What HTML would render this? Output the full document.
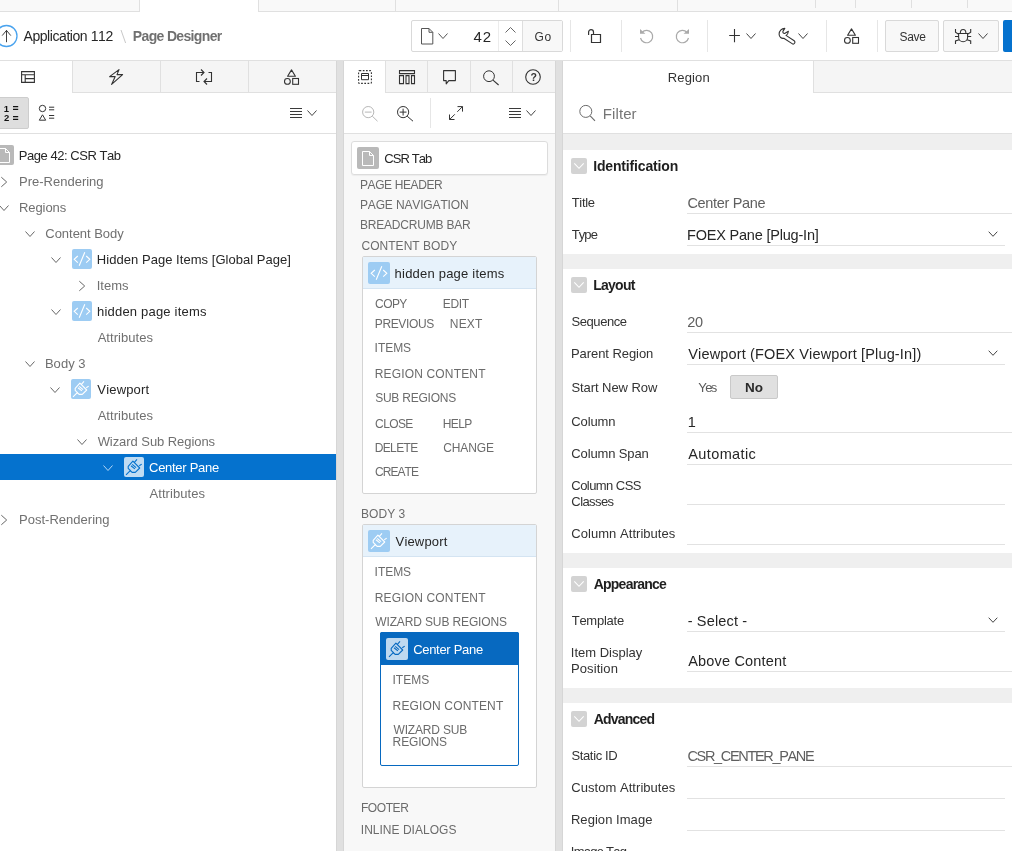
<!DOCTYPE html>
<html lang="en">
<head>
<meta charset="utf-8">
<title>Page Designer</title>
<style>
*{box-sizing:border-box;margin:0;padding:0}
html,body{width:1012px;height:851px;overflow:hidden;background:#fff}
body{font-family:"Liberation Sans",sans-serif;font-size:13px;color:#262626;position:relative}
.abs{position:absolute}
svg{display:block;overflow:visible}
.t{position:absolute;white-space:nowrap;line-height:16px;font-kerning:none}
#w{position:absolute;left:0;top:0;width:1012px;height:851px;will-change:transform}
#strip{position:absolute;left:0;top:0;width:1012px;height:12px;background:#f9f9f9;border-bottom:1px solid #e0e0e0}
#strip i{position:absolute;top:0;height:8px;width:1px;background:#e0e0e0}
#strip .act{position:absolute;left:139px;top:0;width:120px;height:12px;background:#fff;border-left:1px solid #e0e0e0;border-right:1px solid #e0e0e0}
#tb{position:absolute;left:0;top:12px;width:1012px;height:49px;background:#fff;border-bottom:1px solid #e0e0e0}
.sep{position:absolute;top:20px;width:1px;height:32px;background:#e6e6e6}
.btn{position:absolute;top:20px;height:32px;border:1px solid #d9d9d9;border-radius:2px;background:#f8f8f8}
.split{position:absolute;top:61px;width:8px;height:790px;background:#e0e0e0;border-left:1px solid #d6d6d6;border-right:1px solid #d6d6d6}
.tabbar{position:absolute;top:61px;height:32px;background:#f5f5f5;border-bottom:1px solid #e0e0e0}
.tab{position:absolute;top:0;height:31px;border-left:1px solid #e0e0e0}
.tab.on{background:#fff;height:32px;border-left:0}
</style>
</head>
<body>
<div id="w">
<div id="strip"><div class="act"></div><i style="left:395px;height:11px"></i><i style="left:558px;height:11px"></i><i style="left:677px;height:11px"></i><i style="left:815px"></i><i style="left:855px"></i><i style="left:911px"></i><i style="left:967px"></i></div>
<div id="tb"></div>
<svg class="abs" style="left:-6px;top:24px" width="25" height="24" viewBox="-6 24 25 24"><circle cx="6.50" cy="36" r="10.50" fill="#fff" stroke="#4aa3ee" stroke-width="1.30"/><path d="M6.50 30v12.20M2.20 35.60L6.50 30.40l4.30 5.20" fill="none" stroke="#404040" stroke-width="1"/></svg>
<div class="t" style="left:23.47px;top:28px;font-size:14px;color:#262626;letter-spacing:-0.43px;">Application 112</div>
<svg class="abs" style="left:120px;top:29px" width="7" height="15" viewBox="0 0 7 15"><path d="M1 1l4.60 13" stroke="#c8c8c8" stroke-width="1" fill="none"/></svg>
<div class="t" style="left:132.86px;top:28px;font-size:14px;color:#707070;letter-spacing:-0.66px;font-weight:700;">Page Designer</div>
<div class="btn" style="left:411px;width:152px;background:#fff"></div>
<svg class="abs" style="left:420.5px;top:27.5px" width="13" height="17" viewBox="0 0 13 17"><path d="M0.50 0.50h7.50l3.80 3.80v11.70h-11.30zM8 0.50v3.80h3.80" fill="none" stroke="#555" stroke-width="1"/></svg>
<svg class="abs" style="left:438.2px;top:33px" width="10" height="6" viewBox="0 0 10 6"><path d="M0.5 0.5l4.5 5.0l4.5-5.0" fill="none" stroke="#555" stroke-width="1"/></svg>
<div class="t" style="left:473.46px;top:29px;font-size:15px;color:#262626;letter-spacing:0.91px;">42</div>
<div class="abs" style="left:498px;top:21px;width:1px;height:30px;background:#ececec;"></div>
<svg class="abs" style="left:505px;top:27px" width="11" height="19" viewBox="0 0 11 19"><path d="M0.50 5.50l5-5l5 5M0.50 13.50l5 5l5-5" fill="none" stroke="#666" stroke-width="1"/></svg>
<div class="abs" style="left:522px;top:21px;width:40px;height:30px;background:#f8f8f8;border-left:1px solid #dedede;"></div>
<div class="t" style="left:534.40px;top:29px;font-size:12px;color:#333;letter-spacing:0.80px;">Go</div>
<div class="sep" style="left:570px"></div>
<svg class="abs" style="left:587px;top:28px" width="15" height="16" viewBox="0 0 15 16"><path d="M4.50 6.50h9v8h-9zM1.60 6.90v-2.80a2.45 2.45 0 0 1 4.90 0v2.40" fill="none" stroke="#333" stroke-width="1.20"/></svg>
<div class="sep" style="left:621px"></div>
<svg class="abs" style="left:639px;top:28px" width="17" height="16" viewBox="0 0 17 16"><path d="M3 4.30a6.20 6.20 0 1 1 -1.50 5.70" fill="none" stroke="#aaa" stroke-width="1.20"/><path d="M1 1l5.40 4.80h-5.40z" fill="#aaa"/></svg>
<svg class="abs" style="left:673px;top:28px" width="17" height="16" viewBox="0 0 17 16"><path d="M14 4.30a6.20 6.20 0 1 0 1.50 5.70" fill="none" stroke="#aaa" stroke-width="1.20"/><path d="M16 1l-5.40 4.80h5.40z" fill="#aaa"/></svg>
<div class="sep" style="left:707px"></div>
<svg class="abs" style="left:728px;top:29px" width="13" height="14" viewBox="0 0 13 14"><path d="M6.50 0v13.20M1.20 6.50h10.70" fill="none" stroke="#333" stroke-width="1.10"/></svg>
<svg class="abs" style="left:746px;top:33px" width="10" height="6" viewBox="0 0 10 6"><path d="M0.5 0.5l4.5 5.0l4.5-5.0" fill="none" stroke="#444" stroke-width="1"/></svg>
<svg class="abs" style="left:778px;top:28px" width="18" height="16" viewBox="0 0 18 16"><path d="M10.40 3.30C10.20 5.50 9.20 6.80 8 7.40L16.20 12.80A1.70 1.70 0 0 1 14.10 15.60L5.80 10.30C3.50 10.80 1.20 9 1.10 6.20C1 3 3.50 0.50 6.80 0.40L4.90 3.40C4.60 4.60 5.40 5.60 6.60 5.50Z" fill="none" stroke="#333" stroke-width="1.10" stroke-linejoin="round"/></svg>
<svg class="abs" style="left:798px;top:33px" width="10" height="6" viewBox="0 0 10 6"><path d="M0.5 0.5l4.5 5.0l4.5-5.0" fill="none" stroke="#444" stroke-width="1"/></svg>
<div class="sep" style="left:826px"></div>
<svg class="abs" style="left:844px;top:28px" width="15" height="16" viewBox="0 0 15 16"><path d="M7.50 0.90l3.90 6.40h-7.80z" fill="none" stroke="#333" stroke-width="1.10" stroke-linejoin="round"/><circle cx="3.40" cy="12.40" r="2.90" fill="none" stroke="#333" stroke-width="1.10"/><rect x="8.70" y="9.50" width="5.80" height="5.80" fill="none" stroke="#333" stroke-width="1.10"/></svg>
<div class="sep" style="left:877px"></div>
<div class="btn" style="left:885px;width:54px"></div>
<div class="t" style="left:899.46px;top:29px;font-size:12px;color:#333;letter-spacing:-0.32px;">Save</div>
<div class="btn" style="left:943px;width:56px"></div>
<svg class="abs" style="left:954px;top:28px" width="18" height="16" viewBox="0 0 18 16"><path d="M4.60 5.50h9v3.80a4.50 4.50 0 0 1 -9 0zM6.30 5.30a2.80 3.80 0 0 1 5.60 0M4.60 8.50h-3.60M13.60 8.50h3.60M4.60 6.20l-3.10-1.90v-3.30M13.60 6.20l3.10-1.90v-3.30M5.20 11.80l-3.70 1.20v3M13 11.80l3.70 1.20v3" fill="none" stroke="#333" stroke-width="1.10"/></svg>
<svg class="abs" style="left:978px;top:33px" width="10" height="6" viewBox="0 0 10 6"><path d="M0.5 0.5l4.5 5.0l4.5-5.0" fill="none" stroke="#444" stroke-width="1"/></svg>
<div class="abs" style="left:1003px;top:20px;width:20px;height:32px;background:#0572ce;border-radius:2px;"></div>
<div class="tabbar" style="left:0;width:336px"><div class="tab on" style="left:0;width:72px"></div><div class="tab" style="left:72px;width:88px"></div><div class="tab" style="left:160px;width:88px"></div><div class="tab" style="left:248px;width:88px"></div></div>
<svg class="abs" style="left:21px;top:71px" width="14" height="12" viewBox="0 0 14 12"><path d="M0.60 0.60h12.80v10.80h-12.80zM0.60 3.80h12.80M4.20 3.80v7.60M4.20 7.60h9.20" fill="none" stroke="#333" stroke-width="1.10"/></svg>
<svg class="abs" style="left:109px;top:69px" width="14" height="16" viewBox="0 0 14 16"><path d="M10 0.60l-9.40 7h5.60l-3.60 7.80l11-9.80h-5.60z" fill="none" stroke="#333" stroke-width="1.10" stroke-linejoin="round"/></svg>
<svg class="abs" style="left:196px;top:69px" width="16" height="16" viewBox="0 0 16 16"><path d="M3.50 12.50h-3v-9h7.30M5 0.50l3 3l-3 3M12.50 3.50h3v9h-7.30M11 9.50l-3 3l3 3" fill="none" stroke="#333" stroke-width="1.10"/></svg>
<svg class="abs" style="left:284px;top:69px" width="15" height="16" viewBox="0 0 15 16"><path d="M7.50 0.90l3.90 6.40h-7.80z" fill="none" stroke="#333" stroke-width="1.10" stroke-linejoin="round"/><circle cx="3.40" cy="12.40" r="2.90" fill="none" stroke="#333" stroke-width="1.10"/><rect x="8.70" y="9.50" width="5.80" height="5.80" fill="none" stroke="#333" stroke-width="1.10"/></svg>
<div class="abs" style="left:0px;top:133px;width:336px;height:1px;background:#e0e0e0;"></div>
<div class="abs" style="left:-4px;top:97px;width:33px;height:32px;background:#dedede;border:1px solid #cdcdcd;border-radius:2px;"></div>
<div class="t" style="left:3.70px;top:101px;font-size:9.5px;color:#111;font-weight:700;">1</div>
<div class="t" style="left:3.97px;top:110px;font-size:9.5px;color:#111;font-weight:700;">2</div>
<svg class="abs" style="left:13px;top:106px" width="6" height="14" viewBox="0 0 6 14"><path d="M0 0.60h5.20M0 3.40h5.20M0 10.60h5.20M0 13.40h5.20" fill="none" stroke="#111" stroke-width="1.10"/></svg>
<svg class="abs" style="left:38px;top:104px" width="17" height="17" viewBox="0 0 17 17"><circle cx="4.50" cy="4.50" r="3.20" fill="none" stroke="#333" stroke-width="1"/><path d="M4.50 10.80l3.20 5.40h-6.40zM11 3.20h5.20M11 5.80h5.20M11 11.50h5.20M11 14.20h5.20" fill="none" stroke="#333" stroke-width="1"/></svg>
<svg class="abs" style="left:290px;top:108px" width="12" height="10" viewBox="0 0 12 10"><path d="M0 0.50h12M0 3.50h12M0 6.50h12M0 9.50h12" fill="none" stroke="#3a3a3a" stroke-width="1"/></svg>
<svg class="abs" style="left:307px;top:110px" width="10" height="6" viewBox="0 0 10 6"><path d="M0.5 0.5l4.5 5.0l4.5-5.0" fill="none" stroke="#444" stroke-width="1"/></svg>
<svg class="abs" style="left:-6px;top:145px" width="20" height="20" viewBox="0 0 20 20"><rect width="20" height="20" rx="2" fill="#b9b9b9"/><g transform="translate(0.0 0.0)"><path d="M4.50 3.50h7l4 4v10h-11zM11.50 3.50v4h4" fill="none" stroke="#fff" stroke-width="1"/></g></svg>
<div class="t" style="left:18.73px;top:148px;font-size:13px;color:#262626;letter-spacing:-0.45px;">Page 42: CSR Tab</div>
<svg class="abs" style="left:0.79px;top:177px" width="6" height="10" viewBox="0 0 6 10"><path d="M0.3 0.2l5.4 4.80l-5.40 4.80" fill="none" stroke="#666" stroke-width="1"/></svg>
<div class="t" style="left:19.03px;top:174px;font-size:13px;color:#707070;">Pre-Rendering</div>
<svg class="abs" style="left:-1px;top:205px" width="10" height="6" viewBox="0 0 10 6"><path d="M0.5 0.5l4.5 5.0l4.5-5.0" fill="none" stroke="#666" stroke-width="1"/></svg>
<div class="t" style="left:19.03px;top:200px;font-size:13px;color:#707070;letter-spacing:-0.08px;">Regions</div>
<svg class="abs" style="left:25px;top:231px" width="10" height="6" viewBox="0 0 10 6"><path d="M0.5 0.5l4.5 5.0l4.5-5.0" fill="none" stroke="#666" stroke-width="1"/></svg>
<div class="t" style="left:45.34px;top:226px;font-size:13px;color:#707070;letter-spacing:-0.04px;">Content Body</div>
<svg class="abs" style="left:72px;top:249px" width="20" height="20" viewBox="0 0 20 20"><rect width="20" height="20" rx="2" fill="#9dccf3"/><g transform="translate(0.0 0.0)"><path d="M5.80 7l-3.60 3.30l3.60 3.30M14.20 7l3.60 3.30l-3.60 3.30M12.80 3.20l-5.60 13.60" fill="none" stroke="#fff" stroke-width="1.10"/></g></svg>
<svg class="abs" style="left:51px;top:257px" width="10" height="6" viewBox="0 0 10 6"><path d="M0.5 0.5l4.5 5.0l4.5-5.0" fill="none" stroke="#666" stroke-width="1"/></svg>
<div class="t" style="left:96.83px;top:252px;font-size:13px;color:#262626;letter-spacing:0.04px;">Hidden Page Items [Global Page]</div>
<svg class="abs" style="left:78.8px;top:281px" width="6" height="10" viewBox="0 0 6 10"><path d="M0.3 0.2l5.4 4.80l-5.40 4.80" fill="none" stroke="#666" stroke-width="1"/></svg>
<div class="t" style="left:96.70px;top:278px;font-size:13px;color:#707070;">Items</div>
<svg class="abs" style="left:72px;top:301px" width="20" height="20" viewBox="0 0 20 20"><rect width="20" height="20" rx="2" fill="#9dccf3"/><g transform="translate(0.0 0.0)"><path d="M5.80 7l-3.60 3.30l3.60 3.30M14.20 7l3.60 3.30l-3.60 3.30M12.80 3.20l-5.60 13.60" fill="none" stroke="#fff" stroke-width="1.10"/></g></svg>
<svg class="abs" style="left:51px;top:309px" width="10" height="6" viewBox="0 0 10 6"><path d="M0.5 0.5l4.5 5.0l4.5-5.0" fill="none" stroke="#666" stroke-width="1"/></svg>
<div class="t" style="left:97.00px;top:304px;font-size:13px;color:#262626;letter-spacing:0.20px;">hidden page items</div>
<div class="t" style="left:97.67px;top:330px;font-size:13px;color:#707070;letter-spacing:0.04px;">Attributes</div>
<svg class="abs" style="left:25px;top:361px" width="10" height="6" viewBox="0 0 10 6"><path d="M0.5 0.5l4.5 5.0l4.5-5.0" fill="none" stroke="#666" stroke-width="1"/></svg>
<div class="t" style="left:44.93px;top:356px;font-size:13px;color:#707070;letter-spacing:0.03px;">Body 3</div>
<svg class="abs" style="left:71px;top:379px" width="20" height="20" viewBox="0 0 20 20"><rect width="20" height="20" rx="2" fill="#9dccf3"/><g transform="translate(0.0 0.0)"><path d="M2 17.80l4.80-4.60M4.20 9.30l4.70-5.20l6.80 6.90l-4.40 4.40h-3.20l-3.90-4zM10.60 5.20l2.40-2.80M15.30 8.80l2.40-1.70M7 8.70l3.90 3.20M8.20 7.40l3.90 3.30" fill="none" stroke="#fff" stroke-width="1.10" stroke-linejoin="round"/></g></svg>
<svg class="abs" style="left:50px;top:387px" width="10" height="6" viewBox="0 0 10 6"><path d="M0.5 0.5l4.5 5.0l4.5-5.0" fill="none" stroke="#666" stroke-width="1"/></svg>
<div class="t" style="left:97.34px;top:382px;font-size:13px;color:#262626;letter-spacing:0.17px;">Viewport</div>
<div class="t" style="left:97.67px;top:408px;font-size:13px;color:#707070;letter-spacing:0.04px;">Attributes</div>
<svg class="abs" style="left:77px;top:439px" width="10" height="6" viewBox="0 0 10 6"><path d="M0.5 0.5l4.5 5.0l4.5-5.0" fill="none" stroke="#666" stroke-width="1"/></svg>
<div class="t" style="left:97.64px;top:434px;font-size:13px;color:#707070;letter-spacing:-0.06px;">Wizard Sub Regions</div>
<div class="abs" style="left:0px;top:454px;width:336px;height:26px;background:#0572ce;"></div>
<svg class="abs" style="left:124px;top:457px" width="20" height="20" viewBox="0 0 20 20"><rect width="20" height="20" rx="2" fill="#c0dcf3"/><g transform="translate(0.0 0.0)"><path d="M2 17.80l4.80-4.60M4.20 9.30l4.70-5.20l6.80 6.90l-4.40 4.40h-3.20l-3.90-4zM10.60 5.20l2.40-2.80M15.30 8.80l2.40-1.70M7 8.70l3.90 3.20M8.20 7.40l3.90 3.30" fill="none" stroke="#0572ce" stroke-width="1.10" stroke-linejoin="round"/></g></svg>
<svg class="abs" style="left:103px;top:465px" width="10" height="6" viewBox="0 0 10 6"><path d="M0.5 0.5l4.5 5.0l4.5-5.0" fill="none" stroke="#b5d6f5" stroke-width="1"/></svg>
<div class="t" style="left:149.04px;top:460px;font-size:13px;color:#fff;letter-spacing:-0.28px;">Center Pane</div>
<div class="t" style="left:149.47px;top:486px;font-size:13px;color:#707070;letter-spacing:0.08px;">Attributes</div>
<svg class="abs" style="left:0.79px;top:515px" width="6" height="10" viewBox="0 0 6 10"><path d="M0.3 0.2l5.4 4.80l-5.40 4.80" fill="none" stroke="#666" stroke-width="1"/></svg>
<div class="t" style="left:19.03px;top:512px;font-size:13px;color:#707070;letter-spacing:0.02px;">Post-Rendering</div>
<div class="split" style="left:336px"></div>
<div class="abs" style="left:344px;top:134px;width:211px;height:717px;background:#f8f8f8;"></div>
<div class="tabbar" style="left:344px;width:211px"><div class="tab on" style="left:0;width:41px"></div><div class="tab" style="left:41px;width:42px"></div><div class="tab" style="left:83px;width:43px"></div><div class="tab" style="left:126px;width:42px"></div><div class="tab" style="left:168px;width:43px"></div></div>
<svg class="abs" style="left:358px;top:70px" width="14" height="14" viewBox="0 0 14 14"><rect x="0.60" y="0.60" width="12.80" height="12.80" rx="1" fill="none" stroke="#333" stroke-width="1.10" stroke-dasharray="1.70 1.50"/><path d="M3.50 3.50h7v6.20h-7zM3.50 5.50h7" fill="none" stroke="#333" stroke-width="1"/></svg>
<svg class="abs" style="left:399px;top:70px" width="16" height="14" viewBox="0 0 16 14"><path d="M0.50 0.60h15v3h-15zM0.50 5.60h4v8h-4zM7 5.60h3v8h-3zM12.50 5.60h3v8h-3z" fill="none" stroke="#333" stroke-width="1.10"/></svg>
<svg class="abs" style="left:443px;top:70px" width="13" height="15" viewBox="0 0 13 15"><path d="M0.60 0.60h11.80v10h-6.60l-2.60 3.20v-3.20h-2.60z" fill="none" stroke="#333" stroke-width="1.10" stroke-linejoin="round"/></svg>
<svg class="abs" style="left:483px;top:70px" width="16" height="16" viewBox="0 0 16 16"><circle cx="6" cy="6.20" r="5.40" fill="none" stroke="#333" stroke-width="1"/><path d="M10 10.20l5.60 4.80" fill="none" stroke="#333" stroke-width="1.10"/></svg>
<svg class="abs" style="left:525px;top:69px" width="16" height="16" viewBox="0 0 16 16"><circle cx="8" cy="8" r="7.30" fill="none" stroke="#333" stroke-width="1.10"/></svg>
<div class="t" style="left:530.42px;top:69px;font-size:10.5px;color:#333;font-weight:700;">?</div>
<div class="abs" style="left:344px;top:93px;width:211px;height:40px;background:#fff;"></div>
<div class="abs" style="left:344px;top:133px;width:211px;height:1px;background:#e0e0e0;"></div>
<svg class="abs" style="left:362px;top:106px" width="16" height="16" viewBox="0 0 16 16"><circle cx="6.20" cy="6.10" r="5.60" fill="none" stroke="#b8b8b8" stroke-width="1"/><path d="M2.80 6.10h6.80M10.30 10.20l5.20 5" fill="none" stroke="#b8b8b8" stroke-width="1"/></svg>
<svg class="abs" style="left:397px;top:106px" width="17" height="16" viewBox="0 0 17 16"><circle cx="6.10" cy="6.10" r="5.60" fill="none" stroke="#333" stroke-width="1"/><path d="M2.70 6.10h6.80M6.10 2.70v6.80M10.20 10.20l5.80 5" fill="none" stroke="#333" stroke-width="1"/></svg>
<div class="abs" style="left:430px;top:98px;width:1px;height:30px;background:#e6e6e6;"></div>
<svg class="abs" style="left:449px;top:106px" width="14" height="14" viewBox="0 0 14 14"><path d="M8.50 0.60h5v5M13.50 0.60l-5.20 5.20M5.80 8.30l-5.20 5.20M0.50 8.50v5h5" fill="none" stroke="#333" stroke-width="1"/></svg>
<svg class="abs" style="left:509px;top:108px" width="12" height="10" viewBox="0 0 12 10"><path d="M0 0.50h12M0 3.50h12M0 6.50h12M0 9.50h12" fill="none" stroke="#3a3a3a" stroke-width="1"/></svg>
<svg class="abs" style="left:525.5px;top:110px" width="10" height="6" viewBox="0 0 10 6"><path d="M0.5 0.5l4.5 5.0l4.5-5.0" fill="none" stroke="#444" stroke-width="1"/></svg>
<div class="abs" style="left:351px;top:141px;width:197px;height:34px;background:#fff;border:1px solid #dcdcdc;border-radius:3px;box-shadow:0 1px 1px rgba(0,0,0,.05);"></div>
<svg class="abs" style="left:357px;top:147px" width="22" height="22" viewBox="0 0 22 22"><rect width="22" height="22" rx="2" fill="#b9b9b9"/><g transform="translate(1.0 1.0)"><path d="M4.50 3.50h7l4 4v10h-11zM11.50 3.50v4h4" fill="none" stroke="#fff" stroke-width="1"/></g></svg>
<div class="t" style="left:384.24px;top:151px;font-size:13px;color:#262626;letter-spacing:-0.89px;">CSR Tab</div>
<div class="t" style="left:359.92px;top:177px;font-size:12px;color:#6b6b6b;letter-spacing:-0.39px;">PAGE HEADER</div>
<div class="t" style="left:359.92px;top:197px;font-size:12px;color:#6b6b6b;letter-spacing:-0.14px;">PAGE NAVIGATION</div>
<div class="t" style="left:359.92px;top:217px;font-size:12px;color:#6b6b6b;letter-spacing:-0.20px;">BREADCRUMB BAR</div>
<div class="t" style="left:361.49px;top:238px;font-size:12px;color:#6b6b6b;letter-spacing:0.03px;">CONTENT BODY</div>
<div class="abs" style="left:362px;top:256px;width:175px;height:238px;background:#fff;border:1px solid #d4d4d4;border-radius:2px;"></div>
<div class="abs" style="left:363px;top:257px;width:173px;height:32px;background:#e7f2fb;border-bottom:1px solid #d4e4f2;"></div>
<svg class="abs" style="left:368px;top:262px" width="22" height="22" viewBox="0 0 22 22"><rect width="22" height="22" rx="2" fill="#9dccf3"/><g transform="translate(1.0 1.0)"><path d="M5.80 7l-3.60 3.30l3.60 3.30M14.20 7l3.60 3.30l-3.60 3.30M12.80 3.20l-5.60 13.60" fill="none" stroke="#fff" stroke-width="1.10"/></g></svg>
<div class="t" style="left:394.60px;top:266px;font-size:13px;color:#262626;letter-spacing:0.21px;">hidden page items</div>
<div class="t" style="left:375.09px;top:296px;font-size:12px;color:#6b6b6b;letter-spacing:-0.58px;">COPY</div>
<div class="t" style="left:442.82px;top:296px;font-size:12px;color:#6b6b6b;letter-spacing:-0.32px;">EDIT</div>
<div class="t" style="left:374.72px;top:316px;font-size:12px;color:#6b6b6b;letter-spacing:-0.34px;">PREVIOUS</div>
<div class="t" style="left:449.82px;top:316px;font-size:12px;color:#6b6b6b;letter-spacing:0.15px;">NEXT</div>
<div class="t" style="left:374.59px;top:340px;font-size:12px;color:#6b6b6b;letter-spacing:-0.03px;">ITEMS</div>
<div class="t" style="left:374.72px;top:366px;font-size:12px;color:#6b6b6b;letter-spacing:0.16px;">REGION CONTENT</div>
<div class="t" style="left:375.16px;top:390px;font-size:12px;color:#6b6b6b;letter-spacing:-0.23px;">SUB REGIONS</div>
<div class="t" style="left:375.09px;top:416px;font-size:12px;color:#6b6b6b;letter-spacing:-0.61px;">CLOSE</div>
<div class="t" style="left:442.82px;top:416px;font-size:12px;color:#6b6b6b;letter-spacing:-0.61px;">HELP</div>
<div class="t" style="left:374.72px;top:440px;font-size:12px;color:#6b6b6b;letter-spacing:-0.64px;">DELETE</div>
<div class="t" style="left:443.19px;top:440px;font-size:12px;color:#6b6b6b;letter-spacing:-0.08px;">CHANGE</div>
<div class="t" style="left:375.09px;top:464px;font-size:12px;color:#6b6b6b;letter-spacing:-0.97px;">CREATE</div>
<div class="t" style="left:361.02px;top:506px;font-size:12px;color:#6b6b6b;letter-spacing:0.04px;">BODY 3</div>
<div class="abs" style="left:362px;top:524px;width:175px;height:264px;background:#fff;border:1px solid #d4d4d4;border-radius:2px;"></div>
<div class="abs" style="left:363px;top:525px;width:173px;height:32px;background:#e7f2fb;border-bottom:1px solid #d4e4f2;"></div>
<svg class="abs" style="left:368px;top:530px" width="22" height="22" viewBox="0 0 22 22"><rect width="22" height="22" rx="2" fill="#9dccf3"/><g transform="translate(1.0 1.0)"><path d="M2 17.80l4.80-4.60M4.20 9.30l4.70-5.20l6.80 6.90l-4.40 4.40h-3.20l-3.90-4zM10.60 5.20l2.40-2.80M15.30 8.80l2.40-1.70M7 8.70l3.90 3.20M8.20 7.40l3.90 3.30" fill="none" stroke="#fff" stroke-width="1.10" stroke-linejoin="round"/></g></svg>
<div class="t" style="left:395.54px;top:534px;font-size:13px;color:#262626;letter-spacing:0.18px;">Viewport</div>
<div class="t" style="left:374.59px;top:564px;font-size:12px;color:#6b6b6b;letter-spacing:-0.03px;">ITEMS</div>
<div class="t" style="left:374.72px;top:590px;font-size:12px;color:#6b6b6b;letter-spacing:0.16px;">REGION CONTENT</div>
<div class="t" style="left:375.25px;top:614px;font-size:12px;color:#6b6b6b;letter-spacing:-0.13px;">WIZARD SUB REGIONS</div>
<div class="abs" style="left:380px;top:632px;width:139px;height:134px;background:#fff;border:1px solid #0769c0;border-radius:2px;"></div>
<div class="abs" style="left:380px;top:632px;width:139px;height:33px;background:#0769c0;border-radius:2px 2px 0 0;"></div>
<svg class="abs" style="left:386px;top:638px" width="22" height="22" viewBox="0 0 22 22"><rect width="22" height="22" rx="2" fill="#bfd9f0"/><g transform="translate(1.0 1.0)"><path d="M2 17.80l4.80-4.60M4.20 9.30l4.70-5.20l6.80 6.90l-4.40 4.40h-3.20l-3.90-4zM10.60 5.20l2.40-2.80M15.30 8.80l2.40-1.70M7 8.70l3.90 3.20M8.20 7.40l3.90 3.30" fill="none" stroke="#0769c0" stroke-width="1.10" stroke-linejoin="round"/></g></svg>
<div class="t" style="left:413.14px;top:642px;font-size:13px;color:#fff;letter-spacing:-0.30px;">Center Pane</div>
<div class="t" style="left:392.49px;top:672px;font-size:12px;color:#6b6b6b;letter-spacing:0.02px;">ITEMS</div>
<div class="t" style="left:392.62px;top:698px;font-size:12px;color:#6b6b6b;letter-spacing:0.15px;">REGION CONTENT</div>
<div class="t" style="left:393.55px;top:722px;font-size:12px;color:#6b6b6b;letter-spacing:-0.18px;">WIZARD SUB</div>
<div class="t" style="left:392.62px;top:734px;font-size:12px;color:#6b6b6b;letter-spacing:-0.15px;">REGIONS</div>
<div class="t" style="left:360.92px;top:800px;font-size:12px;color:#6b6b6b;letter-spacing:-0.41px;">FOOTER</div>
<div class="t" style="left:360.79px;top:822px;font-size:12px;color:#6b6b6b;letter-spacing:0.02px;">INLINE DIALOGS</div>
<div class="split" style="left:555px"></div>
<div class="abs" style="left:563px;top:61px;width:449px;height:32px;background:#f5f5f5;border-bottom:1px solid #e0e0e0;"></div>
<div class="abs" style="left:563px;top:61px;width:251px;height:32px;background:#fff;border-right:1px solid #e0e0e0;"></div>
<div class="t" style="left:667.83px;top:70px;font-size:13px;color:#333;letter-spacing:0.12px;">Region</div>
<svg class="abs" style="left:579px;top:105px" width="17" height="17" viewBox="0 0 17 17"><circle cx="6.80" cy="6.40" r="6" fill="none" stroke="#6a6a6a" stroke-width="1"/><path d="M11.20 10.80l4.80 5" fill="none" stroke="#6a6a6a" stroke-width="1.10"/></svg>
<div class="t" style="left:602.87px;top:106px;font-size:15px;color:#757575;letter-spacing:0.07px;">Filter</div>
<div class="abs" style="left:563px;top:133px;width:449px;height:1px;background:#e0e0e0;"></div>
<div class="abs" style="left:563px;top:134px;width:449px;height:16px;background:#efefef;"></div>
<div class="abs" style="left:571px;top:158px;width:16px;height:16px;background:#d3d3d3;border-radius:2px;"></div>
<svg class="abs" style="left:574px;top:163px" width="10" height="6" viewBox="0 0 10 6"><path d="M0.30 0.40l4.70 4.90l4.70-4.90" fill="none" stroke="#fff" stroke-width="1.10"/></svg>
<div class="t" style="left:593.16px;top:158px;font-size:14px;color:#1f1f1f;letter-spacing:-0.15px;font-weight:700;">Identification</div>
<div class="t" style="left:571.71px;top:195px;font-size:13px;color:#333;letter-spacing:-0.32px;">Title</div>
<div class="t" style="left:687.46px;top:195px;font-size:14.5px;color:#5f5f5f;letter-spacing:-0.32px;">Center Pane</div>
<div class="abs" style="left:687px;top:213px;width:325px;height:1px;background:#e2e2e2;"></div>
<div class="t" style="left:571.71px;top:227px;font-size:13px;color:#333;letter-spacing:-0.91px;">Type</div>
<div class="t" style="left:687.01px;top:227px;font-size:14.5px;color:#262626;letter-spacing:-0.20px;">FOEX Pane [Plug-In]</div>
<div class="abs" style="left:687px;top:245px;width:318px;height:1px;background:#e2e2e2;"></div>
<svg class="abs" style="left:988px;top:230.7px" width="10" height="6" viewBox="0 0 10 6"><path d="M0.7 0.7l4.3 4.6l4.3-4.6" fill="none" stroke="#444" stroke-width="1"/></svg>
<div class="abs" style="left:563px;top:254px;width:449px;height:15px;background:#efefef;"></div>
<div class="abs" style="left:571px;top:277px;width:16px;height:16px;background:#d3d3d3;border-radius:2px;"></div>
<svg class="abs" style="left:574px;top:282px" width="10" height="6" viewBox="0 0 10 6"><path d="M0.30 0.40l4.70 4.90l4.70-4.90" fill="none" stroke="#fff" stroke-width="1.10"/></svg>
<div class="t" style="left:593.16px;top:277px;font-size:14px;color:#1f1f1f;letter-spacing:-0.72px;font-weight:700;">Layout</div>
<div class="t" style="left:571.41px;top:314px;font-size:13px;color:#333;letter-spacing:-0.41px;">Sequence</div>
<div class="t" style="left:687.17px;top:314px;font-size:14.5px;color:#5f5f5f;letter-spacing:-0.23px;">20</div>
<div class="abs" style="left:687px;top:332px;width:325px;height:1px;background:#e2e2e2;"></div>
<div class="t" style="left:570.93px;top:346px;font-size:13px;color:#333;letter-spacing:-0.06px;">Parent Region</div>
<div class="t" style="left:688.24px;top:346px;font-size:14.5px;color:#262626;letter-spacing:0.15px;">Viewport (FOEX Viewport [Plug-In])</div>
<div class="abs" style="left:687px;top:364px;width:318px;height:1px;background:#e2e2e2;"></div>
<svg class="abs" style="left:988px;top:349.7px" width="10" height="6" viewBox="0 0 10 6"><path d="M0.7 0.7l4.3 4.6l4.3-4.6" fill="none" stroke="#444" stroke-width="1"/></svg>
<div class="t" style="left:571.41px;top:380px;font-size:13px;color:#333;letter-spacing:-0.06px;">Start New Row</div>
<div class="t" style="left:698.21px;top:380px;font-size:13px;color:#5a5a5a;letter-spacing:-1.72px;">Yes</div>
<div class="abs" style="left:730px;top:375px;width:48px;height:24px;background:#e0e0e0;border:1px solid #c9c9c9;border-radius:2px;"></div>
<div class="t" style="left:744.90px;top:380px;font-size:13.5px;color:#2a2a2a;letter-spacing:0.23px;font-weight:700;">No</div>
<div class="t" style="left:571.34px;top:414px;font-size:13px;color:#333;letter-spacing:-0.12px;">Column</div>
<div class="t" style="left:687.70px;top:414px;font-size:14.5px;color:#262626;">1</div>
<div class="abs" style="left:687px;top:432px;width:325px;height:1px;background:#e2e2e2;"></div>
<div class="t" style="left:571.34px;top:446px;font-size:13px;color:#333;letter-spacing:-0.14px;">Column Span</div>
<div class="t" style="left:688.27px;top:446px;font-size:14.5px;color:#262626;letter-spacing:0.39px;">Automatic</div>
<div class="abs" style="left:687px;top:464px;width:325px;height:1px;background:#e2e2e2;"></div>
<div class="t" style="left:571.34px;top:478px;font-size:13px;color:#333;letter-spacing:-0.56px;">Column CSS</div>
<div class="t" style="left:571.34px;top:494px;font-size:13px;color:#333;letter-spacing:-0.58px;">Classes</div>
<div class="abs" style="left:687px;top:504px;width:318px;height:1px;background:#e2e2e2;"></div>
<div class="t" style="left:571.34px;top:526px;font-size:13px;color:#333;letter-spacing:0.04px;">Column Attributes</div>
<div class="abs" style="left:687px;top:544px;width:318px;height:1px;background:#e2e2e2;"></div>
<div class="abs" style="left:563px;top:553px;width:449px;height:15px;background:#efefef;"></div>
<div class="abs" style="left:571px;top:576px;width:16px;height:16px;background:#d3d3d3;border-radius:2px;"></div>
<svg class="abs" style="left:574px;top:581px" width="10" height="6" viewBox="0 0 10 6"><path d="M0.30 0.40l4.70 4.90l4.70-4.90" fill="none" stroke="#fff" stroke-width="1.10"/></svg>
<div class="t" style="left:593.75px;top:576px;font-size:14px;color:#1f1f1f;letter-spacing:-0.78px;font-weight:700;">Appearance</div>
<div class="t" style="left:571.71px;top:613px;font-size:13px;color:#333;letter-spacing:-0.25px;">Template</div>
<div class="t" style="left:687.66px;top:613px;font-size:14.5px;color:#262626;letter-spacing:0.17px;">- Select -</div>
<div class="abs" style="left:687px;top:631px;width:318px;height:1px;background:#e2e2e2;"></div>
<svg class="abs" style="left:988px;top:616.7px" width="10" height="6" viewBox="0 0 10 6"><path d="M0.7 0.7l4.3 4.6l4.3-4.6" fill="none" stroke="#444" stroke-width="1"/></svg>
<div class="t" style="left:570.80px;top:645px;font-size:13px;color:#333;">Item Display</div>
<div class="t" style="left:570.93px;top:661px;font-size:13px;color:#333;letter-spacing:0.11px;">Position</div>
<div class="t" style="left:688.27px;top:653px;font-size:14.5px;color:#262626;letter-spacing:0.17px;">Above Content</div>
<div class="abs" style="left:687px;top:671px;width:325px;height:1px;background:#e2e2e2;"></div>
<div class="abs" style="left:563px;top:688px;width:449px;height:15px;background:#efefef;"></div>
<div class="abs" style="left:571px;top:711px;width:16px;height:16px;background:#d3d3d3;border-radius:2px;"></div>
<svg class="abs" style="left:574px;top:716px" width="10" height="6" viewBox="0 0 10 6"><path d="M0.30 0.40l4.70 4.90l4.70-4.90" fill="none" stroke="#fff" stroke-width="1.10"/></svg>
<div class="t" style="left:593.75px;top:711px;font-size:14px;color:#1f1f1f;letter-spacing:-0.81px;font-weight:700;">Advanced</div>
<div class="t" style="left:571.41px;top:748px;font-size:13px;color:#333;letter-spacing:-0.35px;">Static ID</div>
<div class="t" style="left:687.46px;top:748px;font-size:14.5px;color:#5f5f5f;letter-spacing:-1.33px;">CSR_CENTER_PANE</div>
<div class="abs" style="left:687px;top:766px;width:325px;height:1px;background:#e2e2e2;"></div>
<div class="t" style="left:571.34px;top:780px;font-size:13px;color:#333;letter-spacing:0.04px;">Custom Attributes</div>
<div class="abs" style="left:687px;top:798px;width:318px;height:1px;background:#e2e2e2;"></div>
<div class="t" style="left:570.93px;top:812px;font-size:13px;color:#333;letter-spacing:0.05px;">Region Image</div>
<div class="abs" style="left:687px;top:830px;width:318px;height:1px;background:#e2e2e2;"></div>
<div class="t" style="left:570.80px;top:844px;font-size:13px;color:#333;letter-spacing:-0.74px;">Image Tag</div>
</div>
</body>
</html>
